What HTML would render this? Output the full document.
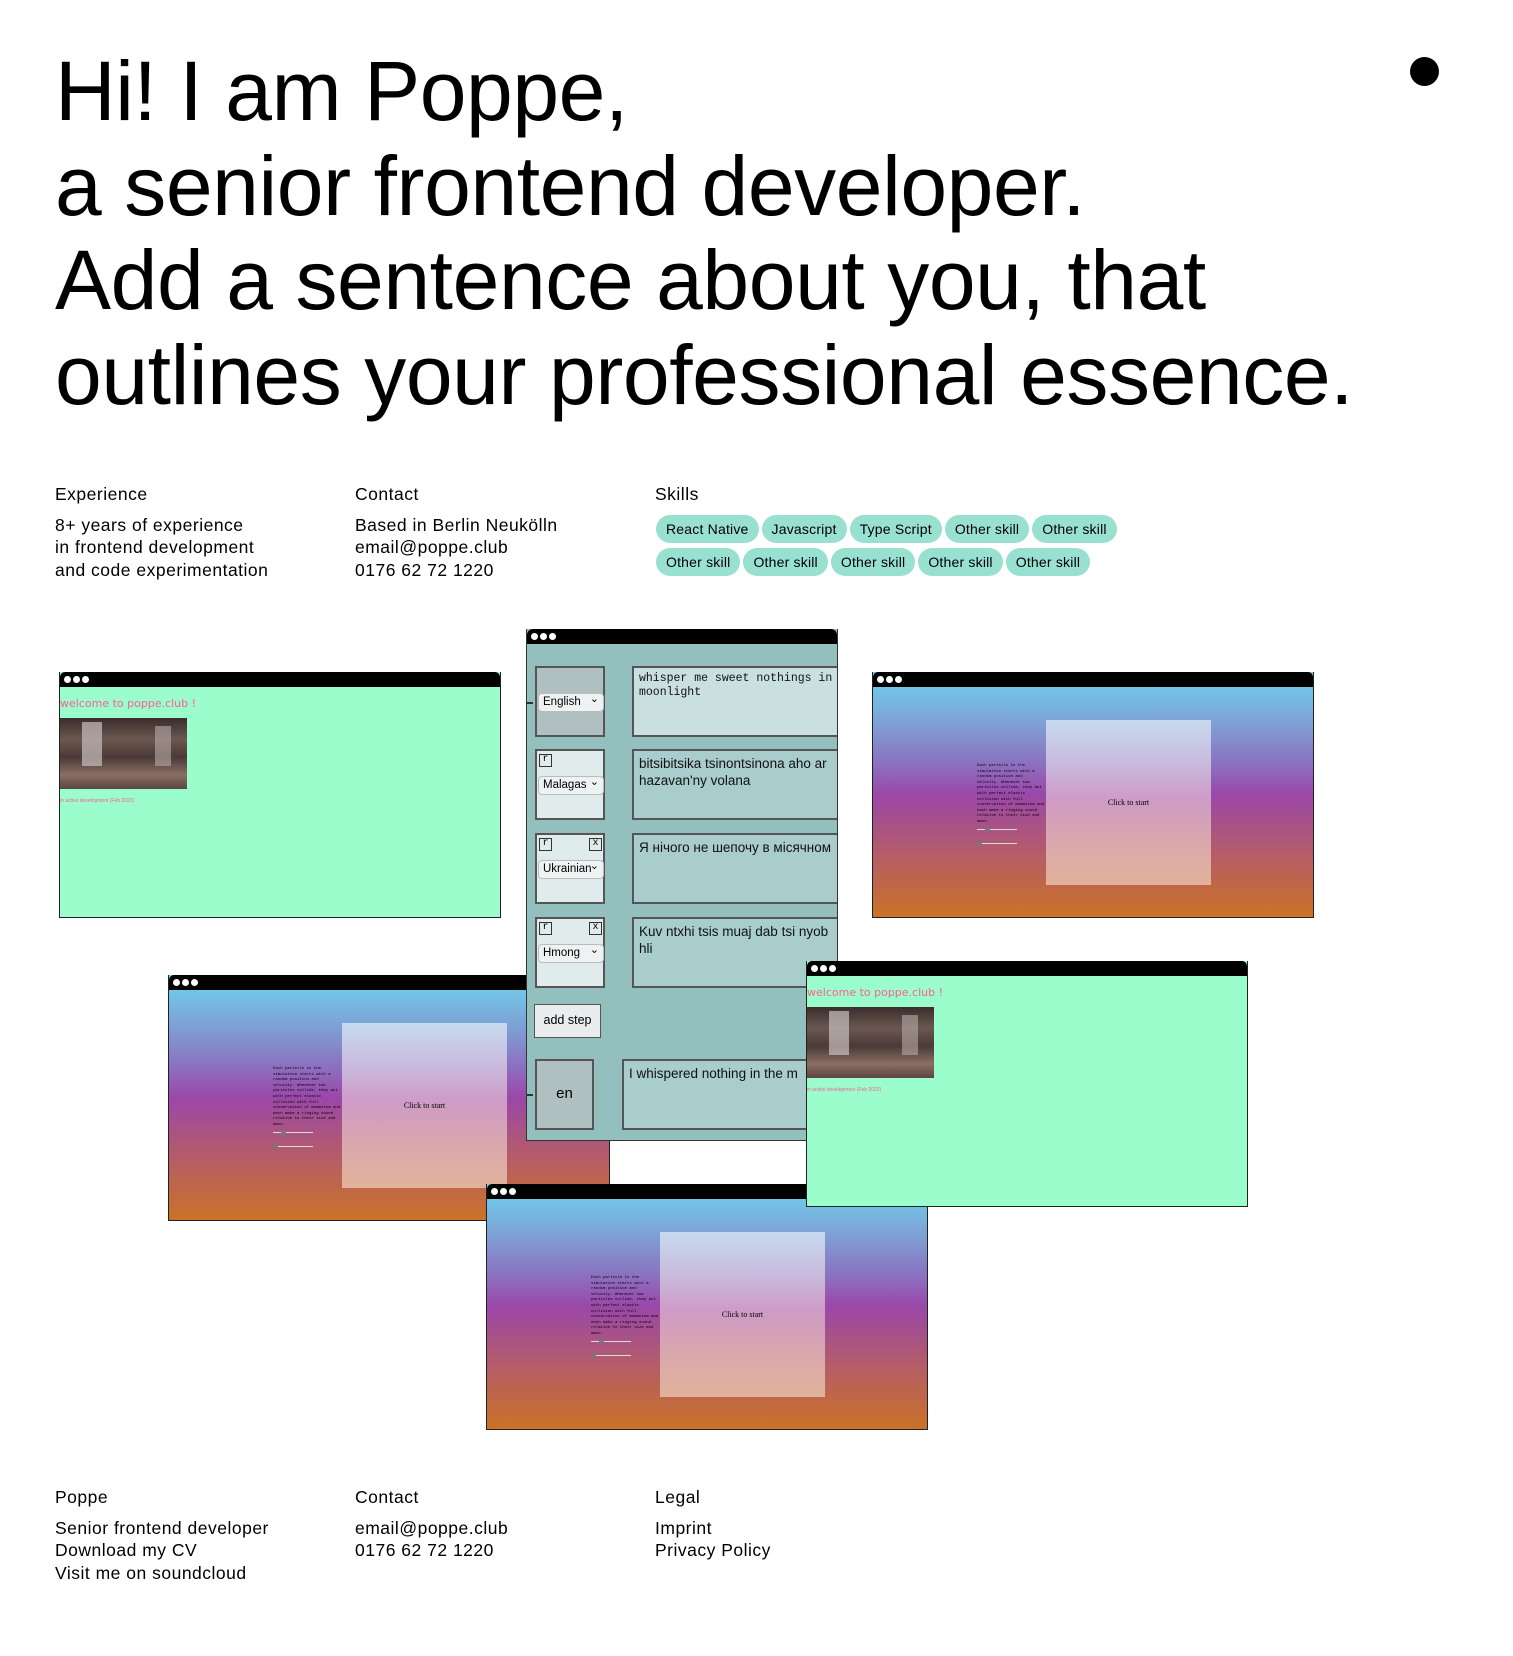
<!DOCTYPE html>
<html><head><meta charset="utf-8">
<style>
*{margin:0;padding:0;box-sizing:border-box}
body{width:1513px;height:1656px;background:#fff;font-family:"Liberation Sans",sans-serif;color:#000;position:relative;overflow:hidden}
h1{position:absolute;left:55px;top:44px;font-size:84px;line-height:94.5px;font-weight:normal;letter-spacing:-0.4px;white-space:nowrap}
.dot{position:absolute;left:1403px;top:57px;width:29px;height:29px;border-radius:50%;background:#000}
.col{position:absolute;font-size:17.5px;line-height:22.5px;letter-spacing:0.5px}
.col .t{margin-bottom:8px}
.chips{position:absolute;left:656px;top:515px;width:480px}
.chip{display:inline-block;height:28px;line-height:28px;padding:0 10px;border-radius:14px;background:#98e0d0;font-size:14px;margin:0 3px 5px 0;letter-spacing:0.2px}
.win{position:absolute;width:442px;height:246px;border:1.5px solid #222;border-top:none;overflow:hidden}
.bar{height:15px;background:#000;border-radius:5px 5px 0 0;position:relative}
.bar i{position:absolute;top:4px;width:7px;height:7px;border-radius:50%;background:#fff}
.green{background:#9bfccc}
.green .w{color:#ff5c9a;font-size:11px;margin:10px 0 0 0;font-family:"DejaVu Sans",sans-serif}
.green .img{width:127px;height:71px;margin-top:8px;background:linear-gradient(180deg,#3a2d2c 0%,#6b5750 30%,#4a3a38 55%,#8a6f64 80%,#5a4540 100%);position:relative}
.green .img:before{content:"";position:absolute;left:22px;top:4px;width:20px;height:44px;background:#c9c0bd;opacity:.7}
.green .img:after{content:"";position:absolute;left:95px;top:8px;width:16px;height:40px;background:#b8aba7;opacity:.6}
.green .s{color:#ff5c9a;font-size:5px;margin-top:9px}
.grad{background:linear-gradient(180deg,#6cd5ee 0%,#7da3d6 20%,#8c6fc0 38%,#9a47a8 50%,#b25a6d 72%,#cb7227 100%)}
.panel{position:absolute;left:173px;top:48px;width:165px;height:165px;background:linear-gradient(180deg,rgba(230,240,250,.7),rgba(240,210,220,.6) 50%,rgba(240,210,190,.7));font-family:"Liberation Serif",serif;font-size:8px;text-align:center;line-height:165px}
.ptxt{position:absolute;left:104px;top:92px;width:68px;font-family:"Liberation Mono",monospace;font-size:4px;line-height:5.6px}
.sl{position:absolute;left:104px;height:1px;width:40px;background:#ddd}
.sl b{position:absolute;top:-2px;width:5px;height:5px;border-radius:50%;background:#777}
.cw{position:absolute;left:526px;top:629px;width:312px;height:512px;background:#93bfbf;border:1.5px solid #333;border-top:none;overflow:hidden}
.cw .bar{border-radius:6px 6px 0 0}
.lb{position:absolute;left:8px;width:70px;height:71px;border:2px solid #555;background:#e0ecec}
.ta{position:absolute;left:105px;width:220px;height:71px;border:2px solid #555;background:#a9cccc;font-size:13.5px;line-height:17px;padding:4px 5px;white-space:nowrap;overflow:hidden;color:#111}
.sel{position:absolute;left:1px;top:25px;width:66px;height:19px;border:1px solid #bbb;border-radius:4px;background:#eef2f2;font-size:11.5px;line-height:17px;padding-left:4px;overflow:hidden;white-space:nowrap}
.sel:after{content:"⌄";position:absolute;right:4px;top:-3px;font-size:11px}
.sm{position:absolute;top:3px;width:13px;height:13px;border:1.5px solid #333;font-size:10px;line-height:10px;text-align:center;font-family:"Liberation Mono",monospace}
.conn{position:absolute;left:0;width:8px;height:1.5px;background:#333}
.foot{position:absolute;font-size:17.5px;line-height:22.5px;letter-spacing:0.5px}
.foot .t{margin-bottom:8px}
</style></head><body>
<h1>Hi! I am Poppe,<br>a senior frontend developer.<br>Add a sentence about you, that<br>outlines your professional essence.</h1>
<div class="dot" style="left:1410px"></div>

<div class="col" style="left:55px;top:483px"><div class="t">Experience</div>8+ years of experience<br>in frontend development<br>and code experimentation</div>
<div class="col" style="left:355px;top:483px"><div class="t">Contact</div>Based in Berlin Neukölln<br>email@poppe.club<br>0176 62 72 1220</div>
<div class="col" style="left:655px;top:483px"><div class="t">Skills</div></div>
<div class="chips"><span class="chip">React Native</span><span class="chip">Javascript</span><span class="chip">Type Script</span><span class="chip">Other skill</span><span class="chip">Other skill</span><br><span class="chip">Other skill</span><span class="chip">Other skill</span><span class="chip">Other skill</span><span class="chip">Other skill</span><span class="chip">Other skill</span></div>

<!-- W1 -->
<div class="win green" style="left:59px;top:672px"><div class="bar"><i style="left:4px"></i><i style="left:13px"></i><i style="left:22px"></i></div><div class="w">welcome to poppe.club !</div><div class="img"></div><div class="s">in active development (Feb 2022)</div></div>

<!-- W3 -->
<div class="win grad" style="left:872px;top:672px"><div class="bar"><i style="left:4px"></i><i style="left:13px"></i><i style="left:22px"></i></div>
<div class="ptxt">Each particle in the simulation starts with a random position and velocity. Whenever two particles collide, they act with perfect elastic collision with full conservation of momentum and each make a ringing sound relative to their size and mass.</div>
<div class="sl" style="top:157px"><b style="left:8px"></b></div><div class="sl" style="top:171px"><b style="left:0"></b></div>
<div class="panel">Click to start</div></div>

<!-- W4 -->
<div class="win grad" style="left:168px;top:975px"><div class="bar"><i style="left:4px"></i><i style="left:13px"></i><i style="left:22px"></i></div>
<div class="ptxt">Each particle in the simulation starts with a random position and velocity. Whenever two particles collide, they act with perfect elastic collision with full conservation of momentum and each make a ringing sound relative to their size and mass.</div>
<div class="sl" style="top:157px"><b style="left:8px"></b></div><div class="sl" style="top:171px"><b style="left:0"></b></div>
<div class="panel">Click to start</div></div>

<!-- center -->
<div class="cw"><div class="bar"><i style="left:4px"></i><i style="left:13px"></i><i style="left:22px"></i></div>
<div class="lb" style="top:37px;background:#b0c0c0"><div class="sel">English</div></div><div class="conn" style="top:73px;left:-2px"></div>
<div class="ta" style="top:37px;background:#c9dfe0;font-family:'Liberation Mono',monospace;font-size:11.5px;line-height:14px;white-space:normal;width:210px">whisper me sweet nothings in moonlight</div>
<div class="lb" style="top:120px"><div class="sm" style="left:2px">r</div><div class="sel">Malagas</div></div>
<div class="ta" style="top:120px">bitsibitsika tsinontsinona aho ar<br>hazavan'ny volana</div>
<div class="lb" style="top:204px"><div class="sm" style="left:2px">r</div><div class="sm" style="left:52px">x</div><div class="sel">Ukrainian</div></div>
<div class="ta" style="top:204px">Я нічого не шепочу в місячном</div>
<div class="lb" style="top:288px"><div class="sm" style="left:2px">r</div><div class="sm" style="left:52px">x</div><div class="sel">Hmong</div></div>
<div class="ta" style="top:288px">Kuv ntxhi tsis muaj dab tsi nyob<br>hli</div>
<div style="position:absolute;left:7px;top:375px;width:67px;height:34px;border:1.5px solid #555;background:#eaecee;font-size:12.5px;text-align:center;line-height:31px">add step</div>
<div class="lb" style="top:430px;width:59px;height:71px;background:#b0c0c0;font-size:15px;text-align:center;line-height:66px">en</div><div class="conn" style="top:465px;left:-2px"></div>
<div class="ta" style="top:430px;left:95px">I whispered nothing in the m</div>
</div>

<!-- W6 -->
<div class="win grad" style="left:486px;top:1184px"><div class="bar"><i style="left:4px"></i><i style="left:13px"></i><i style="left:22px"></i></div>
<div class="ptxt">Each particle in the simulation starts with a random position and velocity. Whenever two particles collide, they act with perfect elastic collision with full conservation of momentum and each make a ringing sound relative to their size and mass.</div>
<div class="sl" style="top:157px"><b style="left:8px"></b></div><div class="sl" style="top:171px"><b style="left:0"></b></div>
<div class="panel">Click to start</div></div>

<!-- W5 -->
<div class="win green" style="left:806px;top:961px"><div class="bar"><i style="left:4px"></i><i style="left:13px"></i><i style="left:22px"></i></div><div class="w">welcome to poppe.club !</div><div class="img"></div><div class="s">in active development (Feb 2022)</div></div>

<div class="foot" style="left:55px;top:1486px"><div class="t">Poppe</div>Senior frontend developer<br>Download my CV<br>Visit me on soundcloud</div>
<div class="foot" style="left:355px;top:1486px"><div class="t">Contact</div>email@poppe.club<br>0176 62 72 1220</div>
<div class="foot" style="left:655px;top:1486px"><div class="t">Legal</div>Imprint<br>Privacy Policy</div>
</body></html>
